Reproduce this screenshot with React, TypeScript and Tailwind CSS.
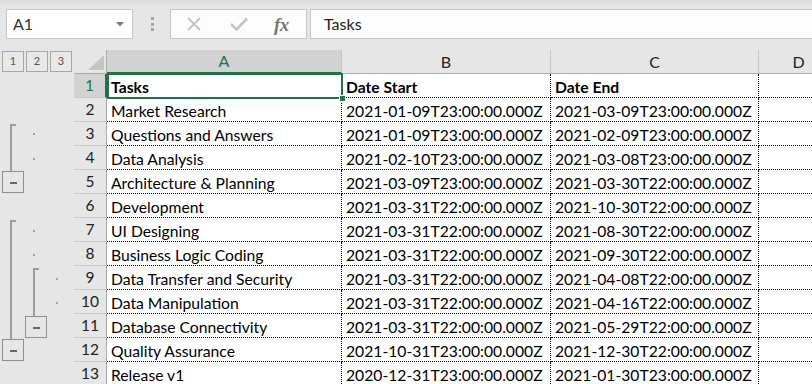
import React from 'react';

const rows = [
  ['Tasks', 'Date Start', 'Date End'],
  ['Market Research', '2021-01-09T23:00:00.000Z', '2021-03-09T23:00:00.000Z'],
  ['Questions and Answers', '2021-01-09T23:00:00.000Z', '2021-02-09T23:00:00.000Z'],
  ['Data Analysis', '2021-02-10T23:00:00.000Z', '2021-03-08T23:00:00.000Z'],
  ['Architecture & Planning', '2021-03-09T23:00:00.000Z', '2021-03-30T22:00:00.000Z'],
  ['Development', '2021-03-31T22:00:00.000Z', '2021-10-30T22:00:00.000Z'],
  ['UI Designing', '2021-03-31T22:00:00.000Z', '2021-08-30T22:00:00.000Z'],
  ['Business Logic Coding', '2021-03-31T22:00:00.000Z', '2021-09-30T22:00:00.000Z'],
  ['Data Transfer and Security', '2021-03-31T22:00:00.000Z', '2021-04-08T22:00:00.000Z'],
  ['Data Manipulation', '2021-03-31T22:00:00.000Z', '2021-04-16T22:00:00.000Z'],
  ['Database Connectivity', '2021-03-31T22:00:00.000Z', '2021-05-29T22:00:00.000Z'],
  ['Quality Assurance', '2021-10-31T23:00:00.000Z', '2021-12-30T22:00:00.000Z'],
  ['Release v1', '2020-12-31T23:00:00.000Z', '2021-01-30T23:00:00.000Z'],
];

function FormulaBar() {
  return (
    <div className="h-[50px] flex items-start pt-[9px] pl-[6px] bg-linear-to-b from-[#dadada] to-[#e6e6e6] to-[12%]">
      <div className="w-[127px] h-[30px] bg-white border border-[#c6c6c6] flex items-center justify-between pl-[6px] pr-[8px]">
        <span className="text-[16px] text-[#333]">A1</span>
        <svg width="8" height="5" viewBox="0 0 8 5">
          <path d="M0 0 H8 L4 4.5 Z" fill="#7a7a7a" />
        </svg>
      </div>
      <div className="ml-[18px] mt-[8px] flex flex-col gap-[2.5px]">
        <span className="w-[3px] h-[3px] bg-[#a6a6a6]" />
        <span className="w-[3px] h-[3px] bg-[#a6a6a6]" />
        <span className="w-[3px] h-[3px] bg-[#a6a6a6]" />
      </div>
      <div className="ml-[16px] w-[137px] h-[30px] bg-[#fdfdfd] border border-[#c6c6c6] flex items-center">
        <svg className="ml-[15px]" width="16" height="14" viewBox="0 0 16 14">
          <path d="M2 1 L14 13 M14 1 L2 13" stroke="#c3c3c3" strokeWidth="1.8" fill="none" />
        </svg>
        <svg className="ml-[28px]" width="18" height="14" viewBox="0 0 18 14">
          <path d="M1 7 L6.5 12.5 L17 1.5" stroke="#c3c3c3" strokeWidth="2.6" fill="none" />
        </svg>
        <span className="ml-[26px] text-[19px] italic font-bold font-['Liberation_Serif',serif] text-[#777] leading-none tracking-[-0.5px]">fx</span>
      </div>
      <div className="ml-[3px] flex-1 h-[30px] bg-[#fdfdfd] border-y border-l border-[#c6c6c6] flex items-center pl-[13px]">
        <span className="text-[16px] text-[#222]">Tasks</span>
      </div>
    </div>
  );
}

function Gutter() {
  const line = '#9d9d9d';
  return (
    <div className="w-[74px] flex flex-col">
      <div className="h-[24px] pt-[1px] pl-[2px] flex gap-[2px]">
        {['1', '2', '3'].map((n) => (
          <div
            key={n}
            className="w-[22px] h-[21px] border border-[#a6a6a6] bg-[#e8e8e8] flex items-center justify-center text-[11px] text-[#555]"
          >
            {n}
          </div>
        ))}
      </div>
      <svg width="74" height="312" viewBox="0 0 74 312">
        <path d="M16 51 H11 V97" stroke={line} strokeWidth="2" fill="none" />
        <path d="M16 147 H11 V265" stroke={line} strokeWidth="2" fill="none" />
        <path d="M39 195 H34 V242" stroke={line} strokeWidth="2" fill="none" />
        <rect x="2.5" y="97.5" width="21" height="21" fill="none" stroke="#8f8f8f" />
        <rect x="2.5" y="265.5" width="21" height="21" fill="none" stroke="#8f8f8f" />
        <rect x="25.5" y="242.5" width="21" height="21" fill="none" stroke="#8f8f8f" />
        <path d="M10 109 H17 M10 277 H17 M33 254 H40" stroke="#666" strokeWidth="2" />
        {[
          [33, 59],
          [33, 84],
          [33, 156],
          [33, 180],
          [56, 204],
          [56, 228],
        ].map(([x, y], i) => (
          <rect key={i} x={x} y={y} width="2" height="2" fill="#a0a0a0" />
        ))}
      </svg>
    </div>
  );
}

function Sheet() {
  const cols = [
    { name: 'A', w: 'w-[235px]' },
    { name: 'B', w: 'w-[209px]' },
    { name: 'C', w: 'w-[208px]' },
  ];
  return (
    <div className="flex-1 flex flex-col">
      <div className="h-[24px] flex">
        <div className="w-[33px] h-full border-r border-b border-[#ababab] flex items-end justify-end pr-[2px] pb-[3px]">
          <svg width="16" height="15" viewBox="0 0 16 15">
            <path d="M16 0 V15 H0 Z" fill="#c4c4c4" />
          </svg>
        </div>
        {cols.map((c, i) => (
          <div
            key={c.name}
            className={
              i === 0
                ? `${c.w} h-full bg-[#d2d2d2] border-r border-[#c6c6c6] border-b-2 border-b-[#217346] flex items-center justify-center text-[16px] text-[#217346]`
                : `${c.w} h-full border-r border-[#c6c6c6] border-b border-b-[#ababab] flex items-center justify-center text-[16px] text-[#222]`
            }
          >
            {c.name}
          </div>
        ))}
        <div className="flex-1 h-full border-b border-[#ababab] flex items-center justify-center pl-[26px] text-[16px] text-[#222]">
          D
        </div>
      </div>
      <div className="relative flex flex-col">
        {rows.map((r, i) => (
          <div key={i} className="h-[24px] flex shrink-0">
            <div
              className={
                i === 0
                  ? 'w-[33px] h-full bg-[#d2d2d2] border-b border-[#c9c9c9] border-r-2 border-r-[#217346] flex items-center justify-center text-[15.5px] text-[#217346]'
                  : 'w-[33px] h-full border-b border-[#c9c9c9] border-r border-r-[#ababab] flex items-center justify-center text-[15.5px] text-[#222]'
              }
            >
              {i + 1}
            </div>
            {r.map((v, j) => (
              <div
                key={j}
                className={`${cols[j].w} h-full bg-white border-r border-b border-dotted border-black pl-[4px] pt-[2px] text-[15.7px] leading-[22px] whitespace-nowrap overflow-hidden ${
                  i === 0 ? 'font-bold' : ''
                }`}
              >
                {v}
              </div>
            ))}
            <div className="flex-1 h-full bg-white border-b border-dotted border-black" />
          </div>
        ))}
        <div className="absolute left-[33px] top-[-1px] w-[236px] h-[26px] border-2 border-[#217346] pointer-events-none" />
        <div className="absolute left-[265px] top-[21px] w-[7px] h-[7px] bg-[#217346] border border-white pointer-events-none" />
      </div>
    </div>
  );
}

export default function App() {
  return (
    <div className="w-[812px] h-[384px] overflow-hidden bg-[#e6e6e6] font-['Lato',sans-serif] text-black">
      <FormulaBar />
      <div className="flex">
        <Gutter />
        <Sheet />
      </div>
    </div>
  );
}
